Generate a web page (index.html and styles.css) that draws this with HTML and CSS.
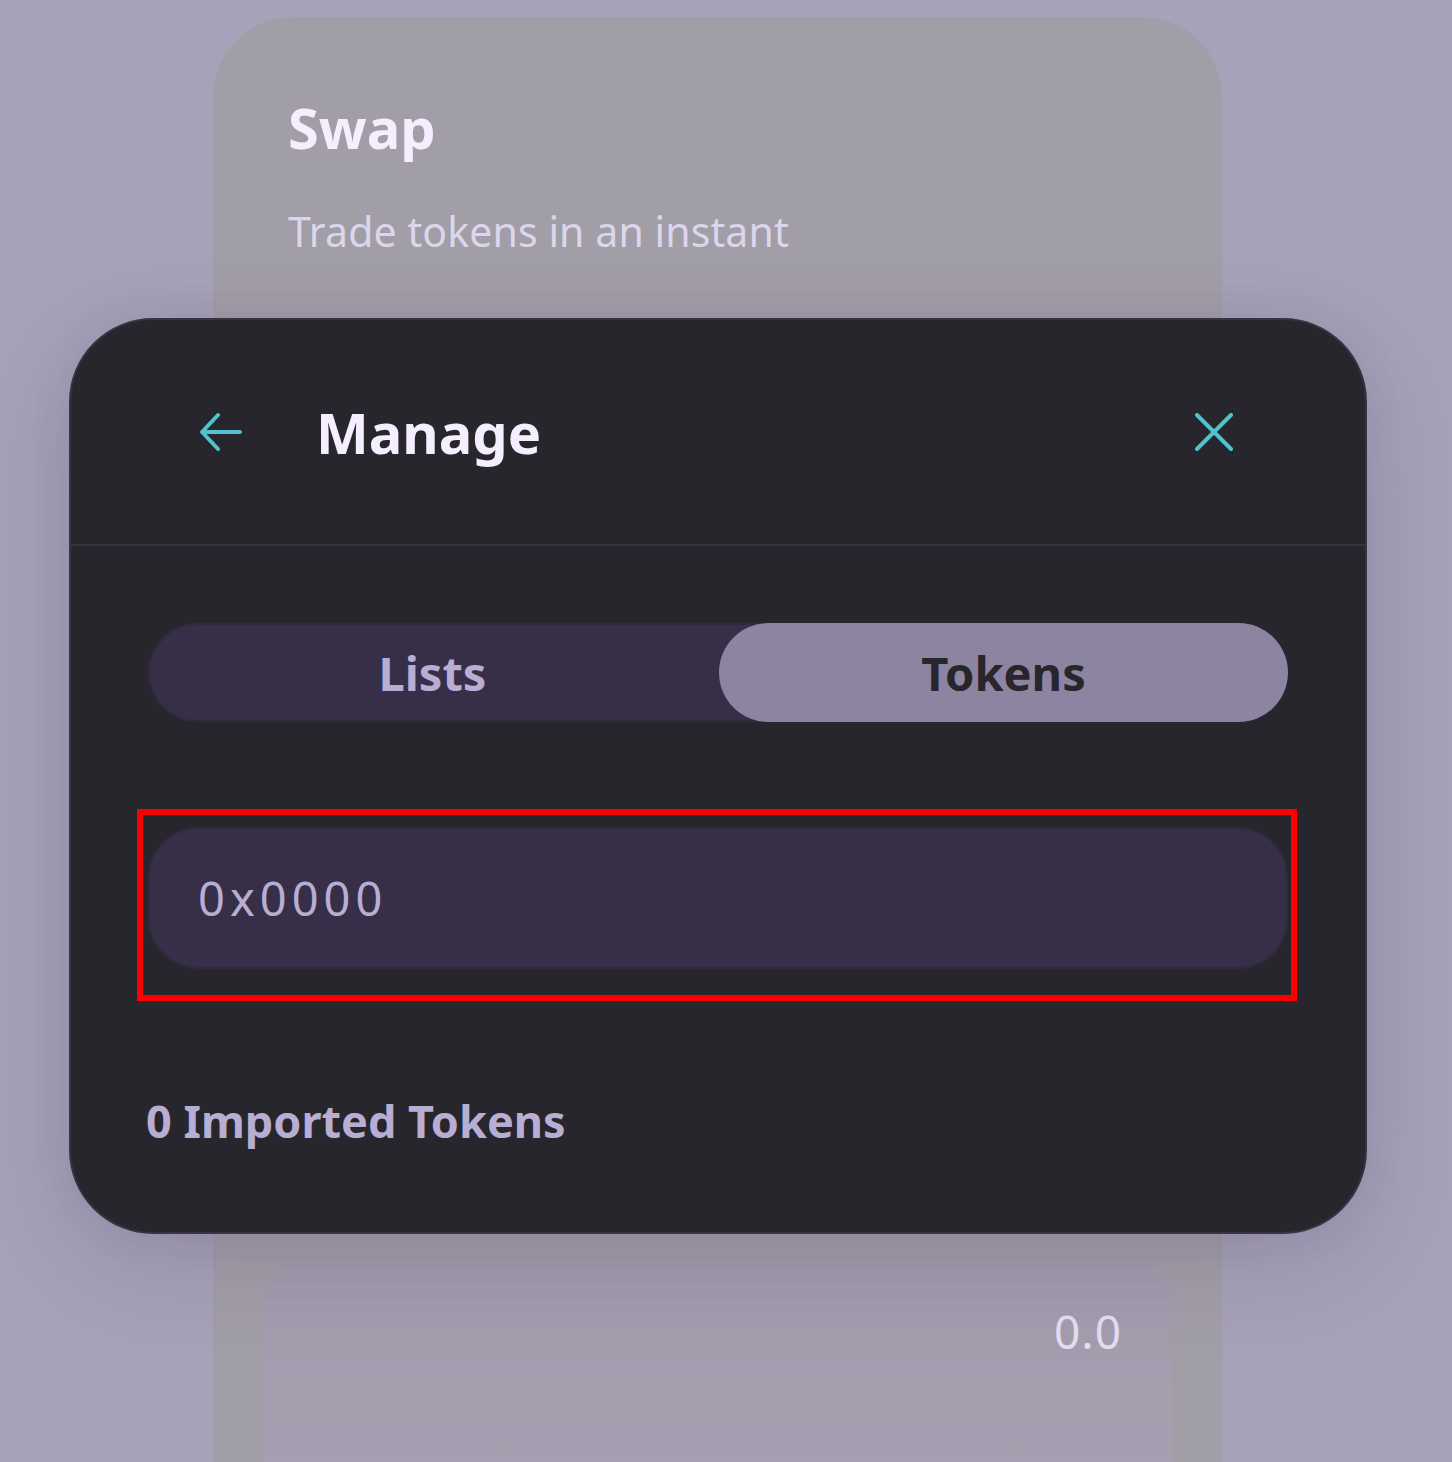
FILE: index.html
```html
<!DOCTYPE html>
<html lang="en">
<head>
<meta charset="utf-8">
<title>Manage tokens</title>
<link rel="stylesheet" href="styles.css">
</head>
<body>
<div class="page">
  <section class="swap-card">
    <h1 class="swap-title">Swap</h1>
    <p class="swap-sub">Trade tokens in an instant</p>
    <div class="swap-panel">
      <span class="swap-amount">0.0</span>
    </div>
  </section>

  <div class="modal">
    <header class="modal-head">
      <button class="icon-btn back" aria-label="Back">
        <svg width="44" height="40" viewBox="0 0 44 40" fill="none" stroke="#50c3cd" stroke-width="4" stroke-linecap="round" stroke-linejoin="round"><path d="M41 20H3M19 3L3 20l16 17"/></svg>
      </button>
      <h2 class="modal-title">Manage</h2>
      <button class="icon-btn close" aria-label="Close">
        <svg width="38" height="38" viewBox="0 0 38 38" fill="none" stroke="#50c3cd" stroke-width="4" stroke-linecap="round"><path d="M2 2l34 34M36 2L2 36"/></svg>
      </button>
    </header>
    <div class="modal-body">
      <div class="tabs">
        <button class="tab">Lists</button>
        <button class="tab active">Tokens</button>
      </div>
      <div class="highlight">
        <div class="search">0x0000</div>
      </div>
      <p class="imported">0 Imported Tokens</p>
    </div>
  </div>
</div>
</body>
</html>
```

FILE: styles.css
```css
* { box-sizing: border-box; }
html, body { margin: 0; padding: 0; }
body {
  background: #a6a2b9;
  font-family: "Noto Sans", "Open Sans", sans-serif;
  width: 1452px;
  height: 1462px;
  overflow: hidden;
}
.page {
  position: relative;
  height: 1462px;
  padding-top: 17px;
}
.swap-card {
  margin-left: 213px;
  width: 1009px;
  height: 1445px;
  background: #a29ea8;
  border-radius: 80px 80px 0 0;
  padding: 72px 50px 0 50px;
  overflow: hidden;
}
.swap-title {
  margin: 0 0 0 25px;
  font-size: 56px;
  line-height: 76px;
  font-weight: 700;
  color: #f4eeff;
}
.swap-sub {
  margin: 38px 0 0 25px;
  font-size: 41px;
  line-height: 56px;
  color: #dcd6ec;
  letter-spacing: 0.1px;
}
.swap-panel {
  margin-top: 996px;
  height: 400px;
  border-radius: 48px 48px 0 0;
  background: linear-gradient(#a29cad, #a8a2b4);
  display: flex;
  justify-content: flex-end;
  padding: 46px 50px 0 0;
}
.swap-amount {
  font-size: 46px;
  line-height: 60px;
  color: #e4def2;
  letter-spacing: 1px;
}

.modal {
  position: absolute;
  left: 69px;
  top: 318px;
  width: 1298px;
  height: 916px;
  background: #27262c;
  border: 2px solid #383241;
  border-radius: 84px;
  box-shadow: 0 30px 100px rgba(60, 45, 90, 0.16), 0 0 40px rgba(60, 45, 90, 0.08);
  overflow: hidden;
}
.modal-head {
  height: 226px;
  border-bottom: 2px solid #383241;
  display: flex;
  align-items: center;
  padding: 0 132px 0 128px;
}
.icon-btn {
  background: none;
  border: 0;
  padding: 0;
  display: flex;
  cursor: pointer;
}
.back { margin-right: 73px; }
.close { margin-left: auto; }
.modal-title {
  margin: 0;
  font-size: 56px;
  font-weight: 700;
  color: #f4eeff;
  line-height: 1;
}
.modal-body {
  padding: 77px 77px 0 77px;
}
.tabs {
  display: flex;
  height: 99px;
  background: #372f47;
  border-radius: 50px;
  box-shadow: inset 0 0 0 2px #302a3e;
}
.tab {
  flex: 1;
  border: 0;
  background: transparent;
  border-radius: 50px;
  font-family: inherit;
  font-size: 47px;
  font-weight: 700;
  color: #b8add2;
}
.tab:first-child { padding-right: 12px; }
.tab.active {
  background: #8c84a0;
  color: #27262c;
  margin-left: -4px;
}
.highlight {
  margin: 87px -9px 0 -11px;
  border: 6px solid #ff0000;
  padding: 12px 3px 26px 5px;
}
.search {
  height: 142px;
  background: #372f47;
  border: 2px solid #302a3e;
  border-radius: 50px;
  padding-left: 48px;
  display: flex;
  align-items: center;
  font-size: 47px;
  letter-spacing: 5px;
  color: #b8add2;
}
.imported {
  margin: 88px 0 0 -2px;
  font-size: 45px;
  line-height: 64px;
  font-weight: 700;
  color: #b8add2;
}
```
